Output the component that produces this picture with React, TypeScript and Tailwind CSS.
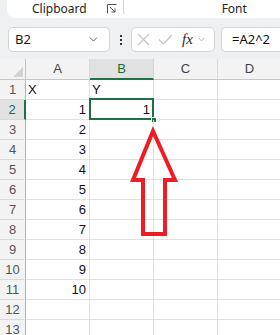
import { ChevronDown } from 'lucide-react';

const cols = ['A', 'B', 'C', 'D'];

const cells: [string, string][] = [
  ['X', 'Y'],
  ['1', '1'],
  ['2', ''],
  ['3', ''],
  ['4', ''],
  ['5', ''],
  ['6', ''],
  ['7', ''],
  ['8', ''],
  ['9', ''],
  ['10', ''],
  ['', ''],
  ['', ''],
];

function Ribbon() {
  return (
    <div className="ml-[7px] h-[18px] bg-white rounded-bl-[8px] flex items-start text-[12px] text-[#242424]">
      <span className="ml-[25px] leading-[17px]">Clipboard</span>
      <svg className="ml-[20px] mt-[4px]" width="10" height="10" viewBox="0 0 10 10" fill="none" stroke="#555" strokeWidth="1">
        <path d="M0.5 9.5V0.5H9.5" />
        <path d="M3 3L8 8M8 4.5V8H4.5" />
      </svg>
      <div className="ml-[6px] w-px h-[14px] bg-[#d6d6d6]" />
      <span className="ml-[98px] leading-[17px]">Font</span>
    </div>
  );
}

function FormulaBar() {
  return (
    <div className="mt-[9px] flex items-center h-[25px]">
      <div className="ml-[8px] w-[102px] h-full bg-white border border-[#d4d4d4] rounded-[5px] flex items-center pl-[6px] pr-[9px]">
        <span className="text-[13px] text-[#1a1a1a] flex-1">B2</span>
        <ChevronDown size={13} strokeWidth={1.5} color="#444" />
      </div>
      <div className="w-[21px] flex flex-col items-center gap-[2px]">
        <span className="w-[2px] h-[2px] bg-[#333]" />
        <span className="w-[2px] h-[2px] bg-[#333]" />
        <span className="w-[2px] h-[2px] bg-[#333]" />
      </div>
      <div className="w-[84px] h-full bg-white border border-[#d4d4d4] rounded-[5px] flex items-center pl-[5px]">
        <svg width="13" height="13" viewBox="0 0 13 13" stroke="#c4c4c4" strokeWidth="1.2">
          <path d="M1 1L12 12M12 1L1 12" />
        </svg>
        <svg className="ml-[8px]" width="15" height="11" viewBox="0 0 15 11" fill="none" stroke="#c4c4c4" strokeWidth="1.2">
          <path d="M1 5.5L5.5 10L14 1" />
        </svg>
        <span className="ml-[9px] text-[15px] italic font-['Liberation_Serif',serif] text-[#2b2b2b] leading-none">fx</span>
        <ChevronDown className="ml-[3px]" size={11} strokeWidth={1.3} color="#888" />
      </div>
      <div className="ml-[6px] flex-1 h-full bg-white border border-[#d4d4d4] rounded-l-[5px] border-r-0 flex items-center pl-[10px]">
        <span className="text-[13px] text-[#111]">=A2^2</span>
      </div>
    </div>
  );
}

function Grid() {
  return (
    <div className="mt-[7px] bg-white font-['Liberation_Sans',sans-serif] text-[13px]">
      <div className="flex h-[21px] bg-[#f3f3f3]">
        <div className="w-[26px] shrink-0 border-r border-b border-[#c6c6c6] relative">
          <svg className="absolute right-[2px] bottom-[2px]" width="10" height="10" viewBox="0 0 10 10">
            <path d="M10 0V10H0Z" fill="#d2d2d2" />
          </svg>
        </div>
        {cols.map((c) =>
          c === 'B' ? (
            <div key={c} className="w-[64px] shrink-0 bg-[#e1e1e1] border-r border-[#d4d4d4] border-b-2 border-b-[#1e7145] flex items-center justify-center text-[#1e6b3c]">
              {c}
            </div>
          ) : (
            <div key={c} className="w-[64px] shrink-0 border-r border-r-[#d9d9d9] border-b border-b-[#c6c6c6] flex items-center justify-center text-[#444]">
              {c}
            </div>
          )
        )}
      </div>
      {cells.map(([a, b], i) => {
        const n = i + 1;
        const sel = n === 2;
        return (
          <div key={n} className="flex h-[20px]">
            <div
              className={
                sel
                  ? 'w-[26px] shrink-0 bg-[#e1e1e1] border-b border-b-[#d9d9d9] border-r-2 border-r-[#1e7145] flex items-center justify-center text-[#1e6b3c]'
                  : 'w-[26px] shrink-0 bg-[#f3f3f3] border-b border-b-[#d9d9d9] border-r border-r-[#b4b4b4] flex items-center justify-center text-[#555]'
              }
            >
              {n}
            </div>
            <div className={`w-[64px] shrink-0 border-r border-b border-[#e1e1e1] flex items-center ${n === 1 ? 'justify-start pl-[2px]' : 'justify-end pr-[3px]'} text-[#111]`}>
              {a}
            </div>
            <div className={`w-[64px] shrink-0 border-r border-b border-[#e1e1e1] flex items-center relative ${n === 1 ? 'justify-start pl-[2px]' : 'justify-end pr-[3px]'} text-[#111]`}>
              {b}
              {sel && (
                <>
                  <div className="absolute left-[-1px] top-[-2px] right-[-1px] bottom-[-1px] border-2 border-[#1e7145]" />
                  <div className="absolute right-[-4px] bottom-[-4px] w-[6px] h-[6px] bg-[#1e7145] border border-white" />
                </>
              )}
            </div>
            <div className="w-[64px] shrink-0 border-r border-b border-[#e1e1e1]" />
            <div className="w-[64px] shrink-0 border-r border-b border-[#e1e1e1]" />
          </div>
        );
      })}
    </div>
  );
}

export default function App() {
  return (
    <div className="relative w-[280px] h-[335px] overflow-hidden bg-[#eef0f2] font-['Noto_Sans',sans-serif]">
      <Ribbon />
      <FormulaBar />
      <Grid />
      <svg className="absolute left-0 top-0 pointer-events-none" width="280" height="335" viewBox="0 0 280 335">
        <polygon
          points="153,131 133,180 143,180 143,234 165,234 165,180 175,180"
          fill="none"
          stroke="#ee1c25"
          strokeWidth="4"
          strokeLinejoin="miter"
        />
      </svg>
    </div>
  );
}
